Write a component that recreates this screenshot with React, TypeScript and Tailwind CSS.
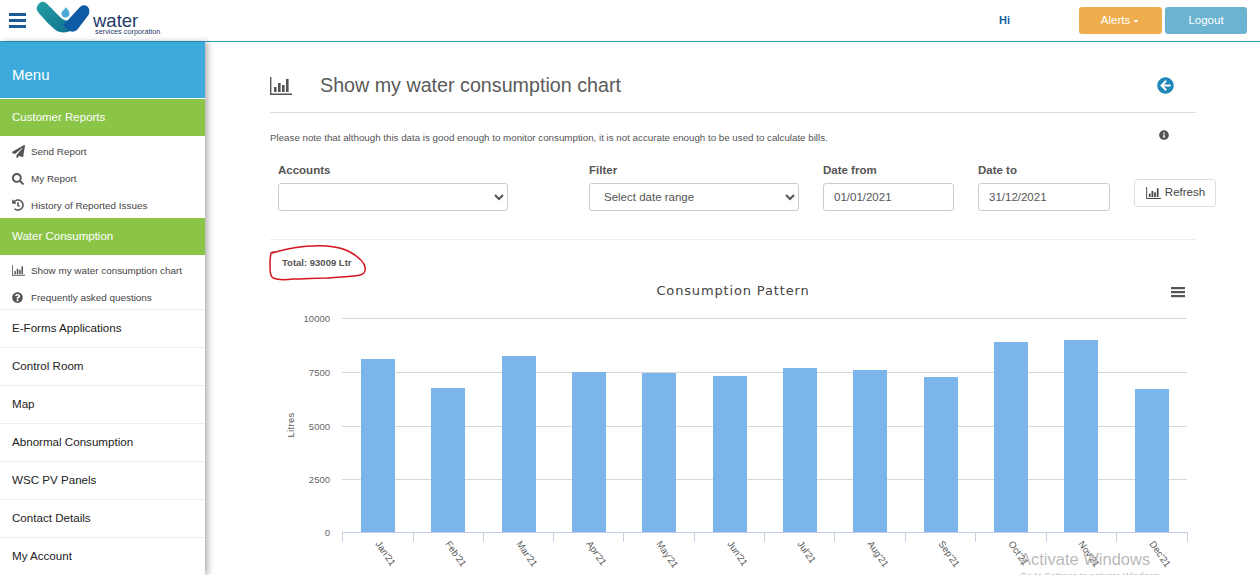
import { useState } from 'react'
import { FaPaperPlane, FaSearch, FaHistory, FaQuestionCircle, FaInfoCircle, FaArrowCircleLeft, FaCaretDown } from 'react-icons/fa'

const bars = [
  { label: "Jan'21", x: 361, top: 359 },
  { label: "Feb'21", x: 431, top: 388 },
  { label: "Mar'21", x: 502, top: 356 },
  { label: "Apr'21", x: 572, top: 372 },
  { label: "May'21", x: 642, top: 373 },
  { label: "Jun'21", x: 713, top: 376 },
  { label: "Jul'21", x: 783, top: 368 },
  { label: "Aug'21", x: 853, top: 370 },
  { label: "Sep'21", x: 924, top: 377 },
  { label: "Oct'21", x: 994, top: 342 },
  { label: "Nov'21", x: 1064, top: 340 },
  { label: "Dec'21", x: 1135, top: 389 },
]

const grid = [
  { label: '10000', y: 318 },
  { label: '7500', y: 372 },
  { label: '5000', y: 426 },
  { label: '2500', y: 479 },
]

function StatsIcon({ className }: { className?: string }) {
  return (
    <svg viewBox="0 0 22 18" className={className} fill="currentColor">
      <path d="M0 0h1.4v16.4H22V18H0z" />
      <rect x="4" y="10" width="2.6" height="5" />
      <rect x="8" y="6" width="2.6" height="9" />
      <rect x="12" y="8" width="2.6" height="7" />
      <rect x="16" y="2" width="2.6" height="13" />
    </svg>
  )
}

function Logo() {
  return (
    <svg viewBox="0 0 56 32" className="w-14 h-8 shrink-0">
      <defs>
        <linearGradient id="tealSwoosh" x1="0" y1="0" x2="1" y2="1">
          <stop offset="0" stopColor="#22a0a4" />
          <stop offset="1" stopColor="#12708f" />
        </linearGradient>
      </defs>
      <path d="M1 6 C2 3 5 0 8 1 C11 2 14 6 24 16 C27 19 30 20 33 19 L37 29 C31 32 25 32 21 30 C15 26 8 18 2 11 C1 9 0 8 1 6z" fill="url(#tealSwoosh)" />
      <path d="M27 24 L32 19 L44 6 C47 3 52 4 53 8 C54 11 53 14 51 16 L41 29 C38 31 36 31 34 30 C31 29 29 27 27 24z" fill="#0f5aa5" />
      <path d="M30 6 C31 8 33.5 10 33.5 12.5 C33.5 15 31.5 16.5 29.5 16.5 C27 16.5 25.5 14.5 25.5 12.5 C25.5 10 29 8.5 30 6z" fill="#4aa8d8" />
    </svg>
  )
}

function SubItem({ icon, label, h }: { icon: React.ReactNode; label: string; h: string }) {
  return (
    <div className={`flex items-center pl-3 text-[9.9px] text-[#444] ${h}`}>
      <span className="w-[19px] shrink-0 text-[#555] flex items-center">{icon}</span>
      <span className="pt-[2px]">{label}</span>
    </div>
  )
}

function NavItem({ label }: { label: string }) {
  return (
    <div className="h-[38px] flex items-center pl-3 pb-[2px] text-[11.6px] text-[#222] border-t border-[#eee]">{label}</div>
  )
}

export default function App() {
  const [account, setAccount] = useState('')
  const [filter, setFilter] = useState('range')

  return (
    <div className="relative w-[1260px] h-[575px] overflow-hidden bg-white text-[#555] font-['Liberation_Sans',Arial,sans-serif]">
      <header className="h-[42px] flex items-center border-b border-[#2d9cc4] bg-white">
        <div className="ml-[9px] w-[17px] shrink-0 flex flex-col gap-[3px]">
          <div className="h-[3px] bg-[#1c5a96]" />
          <div className="h-[3px] bg-[#1c5a96]" />
          <div className="h-[3px] bg-[#1c5a96]" />
        </div>
        <div className="ml-[10px] w-[125px] shrink-0 flex items-start h-full pt-[1px]">
          <Logo />
          <div className="ml-[1px] flex flex-col leading-none">
            <span className="text-[18.5px] text-[#1f3a68] mt-[12px] leading-[15px]">water</span>
            <span className="ml-[2px] text-[7.3px] text-[#1f3a68] whitespace-nowrap">services corporation</span>
          </div>
        </div>
        <span className="ml-[838px] w-[11px] text-[11px] font-bold text-[#15609c]">Hi</span>
        <button className="ml-[69px] w-[83px] h-[27px] rounded-[3px] bg-[#f0ad4e] text-white text-[11.5px] flex items-center justify-center gap-[2px]">
          Alerts <FaCaretDown className="w-2 h-2" />
        </button>
        <button className="ml-[3px] w-[82px] h-[27px] rounded-[3px] bg-[#6bb3d1] text-white text-[11.5px]">Logout</button>
      </header>

      <div className="flex h-[533px]">
        <aside className="w-[205px] shrink-0 h-full bg-white shadow-[3px_0_6px_rgba(0,0,0,0.3)] z-10">
          <div className="h-[45px] bg-[#3cabdb] text-white text-[15px] flex items-center pl-3 pt-[11px] border-b border-white box-content">Menu</div>
          <div className="h-[37px] bg-[#8bc547] text-white text-[11.5px] flex items-center pl-3">Customer Reports</div>
          <SubItem h="h-[27px] mt-[2px]" icon={<FaPaperPlane className="w-[13px] h-[13px]" />} label="Send Report" />
          <SubItem h="h-[27px]" icon={<FaSearch className="w-[12px] h-[12px]" />} label="My Report" />
          <SubItem h="h-[26px]" icon={<FaHistory className="w-[12px] h-[12px]" />} label="History of Reported Issues" />
          <div className="h-[37px] bg-[#8bc547] text-white text-[11.5px] flex items-center pl-3">Water Consumption</div>
          <SubItem h="h-[27px] mt-[2px]" icon={<StatsIcon className="w-[13px] h-[11px]" />} label="Show my water consumption chart" />
          <SubItem h="h-[24px] pt-[2px] mb-[1px]" icon={<FaQuestionCircle className="w-[11px] h-[11px]" />} label="Frequently asked questions" />
          <NavItem label="E-Forms Applications" />
          <NavItem label="Control Room" />
          <NavItem label="Map" />
          <NavItem label="Abnormal Consumption" />
          <NavItem label="WSC PV Panels" />
          <NavItem label="Contact Details" />
          <NavItem label="My Account" />
        </aside>

        <main className="flex-1 min-w-0 pl-[65px] pr-[64px]">
          <div className="h-[71px] pt-[17px] flex items-center border-b border-[#ddd]">
            <StatsIcon className="w-[22px] h-[18px] text-[#555] shrink-0" />
            <h1 className="ml-[28px] mt-[1px] text-[19.7px] text-[#5a5a5a]">Show my water consumption chart</h1>
            <FaArrowCircleLeft className="ml-auto mr-[22px] w-[17px] h-[17px] text-[#1f87b8]" />
          </div>

          <div className="flex items-center h-[44px] pt-[7px] pr-[27px] justify-between">
            <p className="text-[9.75px] text-[#555]">Please note that although this data is good enough to monitor consumption, it is not accurate enough to be used to calculate bills.</p>
            <FaInfoCircle className="w-[10px] h-[10px] text-[#555] -mt-[7px]" />
          </div>

          <div className="flex items-start pl-[8px] h-[57px] w-[946px] mt-[6px]">
            <label className="w-[230px] flex flex-col shrink-0">
              <span className="text-[11.5px] font-bold leading-[14px] mb-[6px]">Accounts</span>
              <select value={account} onChange={(e) => setAccount(e.target.value)} className="h-[28px] w-full rounded-[3px] border border-[#ccc] bg-white text-[11.5px] px-2">
                <option value=""></option>
              </select>
            </label>
            <label className="ml-[81px] w-[210px] flex flex-col shrink-0">
              <span className="text-[11.5px] font-bold leading-[14px] mb-[6px]">Filter</span>
              <select value={filter} onChange={(e) => setFilter(e.target.value)} className="h-[28px] w-full rounded-[3px] border border-[#ccc] bg-white text-[11.5px] text-[#555] px-[10px] pb-[1px]">
                <option value="range">Select date range</option>
              </select>
            </label>
            <label className="ml-[24px] w-[131px] flex flex-col shrink-0">
              <span className="text-[11.5px] font-bold leading-[14px] mb-[6px]">Date from</span>
              <input readOnly value="01/01/2021" className="h-[28px] w-full rounded-[3px] border border-[#ccc] text-[11.5px] text-[#555] px-[10px] pb-[1px]" />
            </label>
            <label className="ml-[24px] w-[132px] flex flex-col shrink-0">
              <span className="text-[11.5px] font-bold leading-[14px] mb-[6px]">Date to</span>
              <input readOnly value="31/12/2021" className="h-[28px] w-full rounded-[3px] border border-[#ccc] text-[11.5px] text-[#555] px-[10px] pb-[1px]" />
            </label>
            <button className="ml-[24px] mt-[16px] w-[82px] h-[28px] shrink-0 rounded-[3px] border border-[#ddd] bg-white text-[11.5px] text-[#444] flex items-center justify-center gap-[3px]">
              <StatsIcon className="w-[17px] h-[12px]" /> Refresh
            </button>
          </div>

          <div className="border-t border-[#eee] mt-[19px] h-[34px] flex items-center pl-[12px] pt-[14px]">
            <span className="text-[9.5px] font-bold text-[#555]">Total: 93009 Ltr</span>
          </div>
        </main>
      </div>

      {/* freehand marker ring round the total */}
      <svg className="absolute left-[268px] top-[244px] w-[100px] h-[38px]" viewBox="0 0 100 38" fill="none">
        <path d="M4 9 C11 7 18 5 25 4 C37 2 48 1 59 2 C69 3 77 5 82 8 C89 12 96 18 97 23 C98 28 96 30 92 31 C82 33 70 33 59 34 C48 34 36 35 25 35 C17 36 10 36 5 34 C2 32 2 28 2 24 C2 18 2 13 3 9 C4 8 5 8 7 8" stroke="#d5141e" strokeWidth="1.5" />
      </svg>

      {/* chart, drawn in page coordinates */}
      <svg className="absolute left-0 top-0 w-[1260px] h-[575px] pointer-events-none" viewBox="0 0 1260 575">
        <text x="733" y="294.5" textAnchor="middle" fontSize="13" letterSpacing="0.85" fill="#444" fontFamily="DejaVu Sans, sans-serif">Consumption Pattern</text>
        <rect x="1171" y="287" width="14" height="2.2" fill="#555" />
        <rect x="1171" y="291" width="14" height="2.2" fill="#555" />
        <rect x="1171" y="295" width="14" height="2.2" fill="#555" />
        {grid.map((g) => (
          <g key={g.label}>
            <line x1="342" x2="1187" y1={g.y + 0.5} y2={g.y + 0.5} stroke="#d8d8d8" />
            <text x="330" y={g.y + 3.5} textAnchor="end" fontSize="9.5" fill="#666" fontFamily="Liberation Sans, sans-serif">{g.label}</text>
          </g>
        ))}
        <text x="330" y="536" textAnchor="end" fontSize="9.5" fill="#666" fontFamily="Liberation Sans, sans-serif">0</text>
        <text transform="translate(294 425) rotate(-90)" textAnchor="middle" fontSize="9.5" letterSpacing="0.3" fill="#555" fontFamily="Liberation Sans, sans-serif">Litres</text>
        {bars.map((b) => (
          <rect key={b.label} x={b.x} y={b.top} width="34" height={532 - b.top} fill="#7cb5ec" />
        ))}
        <line x1="342" x2="1187" y1="532.5" y2="532.5" stroke="#c0d0e0" />
        {[342, 413, 483, 553, 623, 694, 764, 834, 905, 975, 1046, 1116, 1187].map((x) => (
          <line key={x} x1={x + 0.5} x2={x + 0.5} y1="532" y2="542" stroke="#c0d0e0" />
        ))}
        {bars.map((b) => (
          <text key={b.label} transform={`translate(${b.x + 19} 544) rotate(55)`} x="-3" y="4" fontSize="9.5" fill="#555" fontFamily="Liberation Sans, sans-serif">{b.label}</text>
        ))}
      </svg>

      <span className="absolute left-[1020px] top-[549px] text-[16.5px] leading-[20px] text-[#999]/70">Activate Windows</span>
      <span className="absolute left-[1020px] top-[571px] text-[9px] leading-[10px] text-[#999]/70 whitespace-nowrap">Go to Settings to activate Windows.</span>
    </div>
  )
}
